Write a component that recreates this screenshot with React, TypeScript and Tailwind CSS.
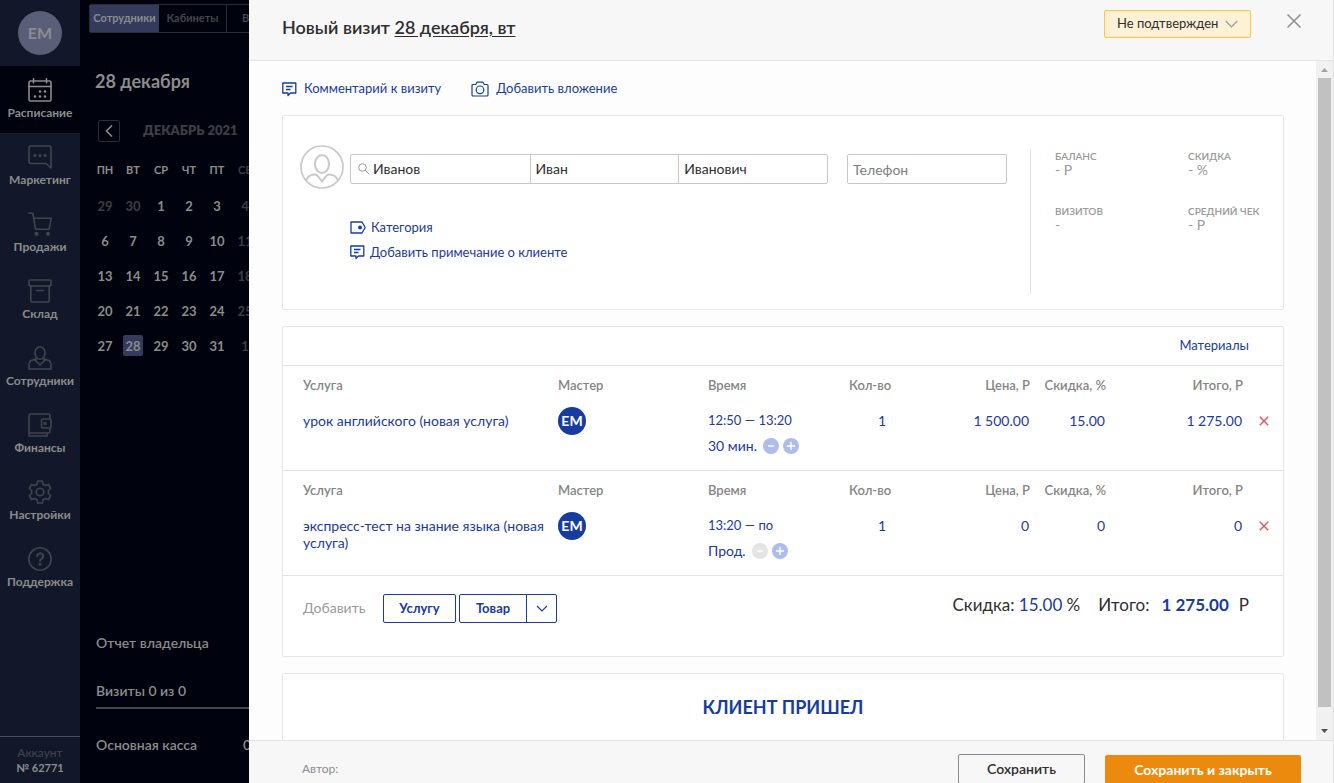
import React from "react";

type IconProps = { children: React.ReactNode };

function NavIcon({ children }: IconProps) {
  return (
    <svg width="24" height="24" viewBox="0 0 24 24" fill="none" stroke="currentColor" strokeWidth="1.6" strokeLinejoin="round" strokeLinecap="round" aria-hidden="true">
      {children}
    </svg>
  );
}

const navItems = [
  {
    label: "Расписание",
    icon: (
      <NavIcon>
        <rect x="1" y="3" width="22" height="20" rx="1.5" />
        <path d="M1 8.5h22M5.5 0.8v4M18.5 0.8v4" />
        <g fill="currentColor" stroke="none">
          <circle cx="12" cy="13.5" r="1.3" />
          <circle cx="17" cy="13.5" r="1.3" />
          <circle cx="7" cy="18.5" r="1.3" />
          <circle cx="12" cy="18.5" r="1.3" />
          <circle cx="17" cy="18.5" r="1.3" />
        </g>
      </NavIcon>
    ),
  },
  {
    label: "Маркетинг",
    icon: (
      <NavIcon>
        <path d="M3 1h18a2 2 0 0 1 2 2v20l-5-4.5H3a2 2 0 0 1-2-2V3a2 2 0 0 1 2-2z" />
        <g fill="currentColor" stroke="none">
          <circle cx="7" cy="10.5" r="1.5" />
          <circle cx="12" cy="10.5" r="1.5" />
          <circle cx="17" cy="10.5" r="1.5" />
        </g>
      </NavIcon>
    ),
  },
  {
    label: "Продажи",
    icon: (
      <NavIcon>
        <path d="M0.8 1.2h4l2.8 16h13.6l2-11H5.7" />
        <circle cx="8.5" cy="21.8" r="1.3" fill="currentColor" />
        <circle cx="20" cy="21.8" r="1.3" fill="currentColor" />
      </NavIcon>
    ),
  },
  {
    label: "Склад",
    icon: (
      <NavIcon>
        <rect x="1" y="1" width="22" height="6" rx="1" />
        <path d="M2.8 7v15a1 1 0 0 0 1 1h16.4a1 1 0 0 0 1-1V7M8.5 11.5h7" />
      </NavIcon>
    ),
  },
  {
    label: "Сотрудники",
    icon: (
      <NavIcon>
        <ellipse cx="12" cy="7" rx="5" ry="6.2" />
        <path d="M9 12.5l-4.5 1.4C2 14.7 1 16.2 1 18.5V23h22v-4.5c0-2.300-1-3.800-3.500-4.600L15 12.500M7 14.200l5 4.800 5-4.800" />
      </NavIcon>
    ),
  },
  {
    label: "Финансы",
    icon: (
      <NavIcon>
        <path d="M22 6V2.5A1.5 1.5 0 0 0 20.5 1h-18A1.5 1.5 0 0 0 1 2.5v20.500h18v-3M1 20h19.500a1.500 1.500 0 0 0 1.500-1.500V15" />
        <rect x="13.5" y="6" width="9.5" height="9" rx="1" />
        <circle cx="17" cy="10.5" r="1" fill="currentColor" />
      </NavIcon>
    ),
  },
  {
    label: "Настройки",
    icon: (
      <NavIcon>
        <path d="M9.7 1h4.6l.7 3.2 2.2 1.3 3.2-1 2.3 4-2.4 2.2v2.6l2.4 2.2-2.3 4-3.2-1-2.2 1.3-.7 3.2H9.7L9 19.8l-2.2-1.3-3.2 1-2.3-4 2.4-2.2v-2.6L1.3 8.5l2.3-4 3.200 1L9 4.200z" />
        <circle cx="12" cy="12" r="3.8" />
      </NavIcon>
    ),
  },
  {
    label: "Поддержка",
    icon: (
      <NavIcon>
        <circle cx="12" cy="12" r="11.2" />
        <path d="M9.2 9.3a2.9 2.9 0 1 1 4.3 2.5c-1 .6-1.5 1.1-1.5 2.4" strokeWidth="2" />
        <circle cx="12" cy="17.3" r=".7" fill="currentColor" />
      </NavIcon>
    ),
  },
];

function Sidebar() {
  return (
    <aside className="flex w-20 shrink-0 flex-col bg-[#121829]">
      <div className="flex h-[66px] shrink-0 items-center justify-center">
        <div className="flex size-11 items-center justify-center rounded-full bg-[#5a5e77] text-base font-bold text-[#8c8c92]">ЕМ</div>
      </div>
      <nav className="flex flex-col">
        {navItems.map((item, i) => (
          <a
            key={item.label}
            href="#"
            className={
              i === 0
                ? "flex h-[67px] flex-col items-center bg-[#00020d] pt-3 text-xs leading-[22px] font-bold text-[#8c8c8c]"
                : "flex h-[67px] flex-col items-center pt-3 text-xs leading-[22px] font-bold text-[#8c8c8c]"
            }
          >
            <span className={i === 0 ? "text-[#8c8c8c]" : "text-[#41444f]"}>{item.icon}</span>
            {item.label}
          </a>
        ))}
      </nav>
      <div className="mt-auto flex h-[47px] shrink-0 flex-col items-center border-t border-[#4a4d58] pt-2 text-xs leading-[15px]">
        <span className="text-[#41444f]">Аккаунт</span>
        <span className="text-[11px] font-bold text-[#8c8c8c]">№ 62771</span>
      </div>
    </aside>
  );
}

const weekdays = ["ПН", "ВТ", "СР", "ЧТ", "ПТ", "СБ", "ВС"];
const weeks = [
  [29, 30, 1, 2, 3, 4, 5],
  [6, 7, 8, 9, 10, 11, 12],
  [13, 14, 15, 16, 17, 18, 19],
  [20, 21, 22, 23, 24, 25, 26],
  [27, 28, 29, 30, 31, 1, 2],
];

function SchedulePanel() {
  return (
    <section className="flex w-[169px] shrink-0 flex-col overflow-hidden bg-[#00020d] text-[#8c8c8c]">
      <div className="mt-1 ml-[9px] flex h-[29px] w-[220px] shrink-0 rounded-xs border border-[#2a2c36] text-[11px] font-bold">
        <button className="w-[69px] shrink-0 bg-[#333a5c]">Сотрудники</button>
        <button className="w-[68px] shrink-0 border-r border-[#2a2c36] text-[#45464c]">Кабинеты</button>
        <button className="flex-1 pl-[15px] text-left text-[#45464c]">Все</button>
      </div>
      <h2 className="mt-9 ml-[15px] text-lg leading-6 font-bold">28 декабря</h2>
      <div className="mt-[27px] flex w-[220px] items-center pl-[18px]">
        <button aria-label="Предыдущий месяц" className="flex size-[22px] items-center justify-center rounded-xs border border-[#2a2c36]">
          <svg width="8" height="12" viewBox="0 0 8 12" fill="none" stroke="currentColor" strokeWidth="1.6" aria-hidden="true">
            <path d="M7 0.5L1.5 6L7 11.5" />
          </svg>
        </button>
        <span className="ml-[23px] text-[13px] font-extrabold text-[#3d3e44]">ДЕКАБРЬ 2021</span>
      </div>
      <table className="mt-[11px] ml-[11px] w-[196px] table-fixed text-center">
        <thead>
          <tr className="h-[35px] text-[11px]">
            {weekdays.map((d, i) => (
              <th key={d} className={i > 4 ? "p-0 font-bold text-[#3d3e44]" : "p-0 font-bold"}>{d}</th>
            ))}
          </tr>
        </thead>
        <tbody className="text-[13px] leading-5 font-bold">
          {weeks.map((week, r) => (
            <tr key={r} className="h-[35px]">
              {week.map((day, c) => (
                <td key={c} className="p-0">
                  <button
                    className={
                      r === 4 && c === 1
                        ? "h-[21px] w-5 rounded-xs bg-[#333a5c]"
                        : (r === 0 && c < 2) || c > 4
                          ? "h-[21px] w-5 text-[#3d3e44]"
                          : "h-[21px] w-5"
                    }
                  >
                    {day}
                  </button>
                </td>
              ))}
            </tr>
          ))}
        </tbody>
      </table>
      <div className="mt-auto flex w-[220px] flex-col pl-4 text-sm leading-5 font-semibold">
        <span>Отчет владельца</span>
        <div className="mt-7 border-b-2 border-[#45464c]">
          <span className="mb-1.5 block">Визиты 0 из 0</span>
        </div>
        <div className="mt-[26px] mb-7 flex gap-[43px]">
          <span className="w-[104px] whitespace-nowrap">Основная касса</span>
          <span>0</span>
        </div>
      </div>
    </section>
  );
}

function CommentIcon() {
  return (
    <svg width="15" height="15" viewBox="0 0 15 15" fill="none" stroke="#173ca0" strokeWidth="1.3" aria-hidden="true">
      <path d="M0.8 1h13v10H8.5L6 13.5V11H0.8z" strokeLinejoin="round" />
      <path d="M4 4.5h6.5M4 7.5h4.5" />
    </svg>
  );
}

function CameraIcon() {
  return (
    <svg width="18" height="16" viewBox="0 0 18 16" fill="none" stroke="#173ca0" strokeWidth="1.2" strokeLinejoin="round" aria-hidden="true">
      <path d="M2 3.5h2.8L6 1.2h6l1.2 2.3H16a1 1 0 0 1 1 1V14a1 1 0 0 1-1 1H2a1 1 0 0 1-1-1V4.5a1 1 0 0 1 1-1z" />
      <circle cx="9" cy="8.8" r="3.8" />
    </svg>
  );
}

function TagIcon() {
  return (
    <svg width="16" height="13" viewBox="0 0 16 13" fill="none" stroke="#173ca0" strokeWidth="1.3" strokeLinejoin="round" aria-hidden="true">
      <path d="M1 1h11l3.2 5.5L12 12H1z" />
      <circle cx="10" cy="6.5" r="1.9" fill="#173ca0" stroke="none" />
    </svg>
  );
}

function ClientCard() {
  const stats = [
    ["БАЛАНС", "- Р"],
    ["СКИДКА", "- %"],
    ["ВИЗИТОВ", "-"],
    ["СРЕДНИЙ ЧЕК", "- Р"],
  ];
  return (
    <section className="flex h-[195px] shrink-0 rounded-xs border border-[#e7e7e7] bg-white pl-[17px]">
      <svg className="mt-[29px] shrink-0" width="44" height="44" viewBox="0 0 44 44" fill="none" stroke="#c8c8c8" strokeWidth="1.7" aria-hidden="true">
        <circle cx="22" cy="22" r="21" />
        <ellipse cx="22" cy="19" rx="7" ry="9" strokeWidth="2" />
        <path d="M6 35.5c1.5-4 5-6 9-6 2.5 0 4.5 4 7 7 2.5-3 4.5-7 7-7 4 0 7.5 2 9 6" strokeWidth="2" />
      </svg>
      <div className="ml-1.5 flex min-w-0 flex-1 flex-col pt-[38px] pr-[23px]">
        <div className="flex gap-[19px]">
          <div className="flex h-[30px] min-w-0 flex-1 rounded-xs border border-[#c8c8c8] text-sm text-[#2e2e2e]">
            <label className="flex min-w-0 flex-[179] items-center pl-[7px]">
              <svg className="shrink-0" width="12" height="12" viewBox="0 0 12 12" fill="none" stroke="#999" aria-hidden="true">
                <circle cx="4.5" cy="4.5" r="3.8" />
                <path d="M7.3 7.3L11.3 11.3" />
              </svg>
              <input aria-label="Фамилия" defaultValue="Иванов" className="min-w-0 flex-1 pl-[3px] outline-none" />
            </label>
            <input aria-label="Имя" defaultValue="Иван" className="min-w-0 flex-[149] border-l border-[#c8c8c8] pl-[5px] outline-none" />
            <input aria-label="Отчество" defaultValue="Иванович" className="min-w-0 flex-[149] border-l border-[#c8c8c8] pl-[5px] outline-none" />
          </div>
          <input
            aria-label="Телефон"
            type="tel"
            placeholder="Телефон"
            className="h-[30px] w-40 shrink-0 rounded-xs border border-[#c8c8c8] pl-[5px] text-sm outline-none placeholder:text-[#7d7d7d]"
          />
        </div>
        <div className="mt-[31px] flex flex-col items-start text-[13px] leading-[25px] text-[#1b3a9b]">
          <button className="flex items-center gap-[5px]"><TagIcon />Категория</button>
          <button className="flex items-center gap-[5px]"><CommentIcon />Добавить примечание о клиенте</button>
        </div>
      </div>
      <dl className="mt-[34px] grid h-36 w-[253px] shrink-0 grid-cols-[133px_1fr] grid-rows-[55px_55px] border-l border-[#e2e2e2] pl-6 text-[#999]">
        {stats.map(([label, value]) => (
          <div key={label}>
            <dt className="text-[10px] leading-3 font-semibold">{label}</dt>
            <dd className="text-sm leading-4">{value}</dd>
          </div>
        ))}
      </dl>
    </section>
  );
}

type Line = {
  name: string;
  from: string;
  to: string;
  duration: string;
  canShrink: boolean;
  price: string;
  discount: string;
  total: string;
};

const lines: Line[] = [
  { name: "урок английского (новая услуга)", from: "12:50", to: "13:20", duration: "30 мин.", canShrink: true, price: "1 500.00", discount: "15.00", total: "1 275.00" },
  { name: "экспресс-тест на знание языка (новая услуга)", from: "13:20", to: "по", duration: "Прод.", canShrink: false, price: "0", discount: "0", total: "0" },
];

function Step({ plus, muted }: { plus?: boolean; muted?: boolean }) {
  return (
    <button
      aria-label={plus ? "Увеличить длительность" : "Уменьшить длительность"}
      className={
        muted
          ? "flex size-4 items-center justify-center rounded-full bg-[#e4e4e4]"
          : "flex size-4 items-center justify-center rounded-full bg-[#afbdec]"
      }
    >
      <svg width="8" height="8" viewBox="0 0 8 8" stroke="#fff" strokeWidth="1.4" aria-hidden="true">
        <path d={plus ? "M0 4h8M4 0v8" : "M1 4h6"} />
      </svg>
    </button>
  );
}

function ServiceTable() {
  return (
    <table className="w-full table-fixed border-separate border-spacing-0 text-left text-[#1b3a9b]">
      <colgroup>
        <col />
        <col className="w-[150px]" />
        <col className="w-[141px]" />
        <col className="w-[66px]" />
        <col className="w-[115px]" />
        <col className="w-[76px]" />
        <col className="w-[137px]" />
        <col className="w-10" />
      </colgroup>
      {lines.map((line) => (
        <tbody key={line.name} className="text-sm">
          <tr className="h-[39px] text-[13px] text-[#858585]">
            <th className="p-0 pl-5 font-semibold">Услуга</th>
            <th className="p-0 font-semibold">Мастер</th>
            <th className="p-0 font-semibold">Время</th>
            <th className="p-0 font-semibold">Кол-во</th>
            <th className="p-0 text-right font-semibold whitespace-nowrap">Цена, Р</th>
            <th className="p-0 text-right font-semibold whitespace-nowrap">Скидка, %</th>
            <th className="p-0 text-right font-semibold whitespace-nowrap">Итого, Р</th>
            <td />
          </tr>
          <tr className="h-[66px] align-top leading-[17px] [&>td]:border-b [&>td]:border-[#e4e4e4]">
            <td className="p-0 pt-[7px] pl-5">{line.name}</td>
            <td className="p-0 pt-0.5">
              <span className="flex size-7 items-center justify-center rounded-full bg-[#173ca0] text-sm font-bold text-white">ЕМ</span>
            </td>
            <td className="p-0 pt-[3px] leading-[25px]">
              <div className="text-[13px]">
                {line.from} <span className="text-[#444]">—</span> {line.to}
              </div>
              <div className="flex items-center">
                <span className="mr-1.5">{line.duration}</span>
                <span className="flex gap-1">
                  <Step muted={!line.canShrink} />
                  <Step plus />
                </span>
              </div>
            </td>
            <td className="p-0 pt-[7px] text-center">1</td>
            <td className="p-0 pt-[7px] pr-px text-right">{line.price}</td>
            <td className="p-0 pt-[7px] pr-px text-right">{line.discount}</td>
            <td className="p-0 pt-[7px] pr-px text-right">{line.total}</td>
            <td className="p-0 pt-[11px] pl-4">
              <button aria-label="Удалить" className="block">
                <svg width="10" height="10" viewBox="0 0 10 10" stroke="#de5454" strokeWidth="1.4" aria-hidden="true">
                  <path d="M0.8 0.8l8.4 8.4M9.2 0.8l-8.4 8.4" />
                </svg>
              </button>
            </td>
          </tr>
        </tbody>
      ))}
    </table>
  );
}

function ServicesCard() {
  return (
    <section className="mt-4 flex shrink-0 flex-col rounded-xs border border-[#e7e7e7] bg-white">
      <div className="flex h-[39px] items-center justify-end border-b border-[#e4e4e4] pr-[34px]">
        <a href="#" className="text-[13px] text-[#1b3a9b]">Материалы</a>
      </div>
      <ServiceTable />
      <div className="flex h-[80px] items-start pt-[18px] pr-[34px] pl-5">
        <span className="w-20 text-sm leading-[27px] text-[#999]">Добавить</span>
        <div className="flex h-[29px] gap-[3px] text-[13px] font-bold text-[#1b3a9b]">
          <button className="w-[73px] rounded-xs border border-[#173ca0]">Услугу</button>
          <div className="flex rounded-xs border border-[#173ca0]">
            <button className="w-[66px]">Товар</button>
            <button aria-label="Другие товары" className="flex w-[30px] items-center justify-center border-l border-[#173ca0]">
              <svg width="12" height="7" viewBox="0 0 12 7" fill="none" stroke="#173ca0" strokeWidth="1.2" aria-hidden="true">
                <path d="M1 1l5 5 5-5" />
              </svg>
            </button>
          </div>
        </div>
        <div className="ml-auto flex text-[17px] leading-[22px] text-[#2e2e2e]">
          <span>
            Скидка: <span className="text-[#1b3a9b]">15.00</span> %
          </span>
          <span className="ml-[18px]">Итого:</span>
          <span className="ml-3 font-bold text-[#1b3a9b]">1 275.00</span>
          <span className="ml-2.5">Р</span>
        </div>
      </div>
    </section>
  );
}

function Scrollbar() {
  return (
    <div className="flex w-[17px] shrink-0 flex-col items-center bg-[#f1f1f1]" aria-hidden="true">
      <svg className="shrink-0" width="17" height="17" viewBox="0 0 17 17"><path d="M5 11l3.5-4L12 11z" fill="#a3a3a3" /></svg>
      <div className="w-[13px] flex-1 bg-[#c1c1c1]" />
      <div className="h-4 shrink-0" />
      <svg className="shrink-0" width="17" height="17" viewBox="0 0 17 17"><path d="M5 6l3.5 4L12 6z" fill="#505050" /></svg>
    </div>
  );
}

function VisitDialog() {
  return (
    <main className="flex min-w-0 flex-1 flex-col border-r border-[#e4e4e4] bg-[#fdfdfd]">
      <header className="flex h-[61px] shrink-0 items-start border-b border-[#e4e4e4] bg-[#f7f7f7] pl-[33px]">
        <h1 className="mt-[15px] text-lg leading-6 font-semibold text-[#2e2e2e]">
          Новый визит <a href="#" className="underline underline-offset-2">28 декабря, вт</a>
        </h1>
        <button className="mt-2.5 ml-auto flex h-7 w-[147px] items-center justify-between rounded-xs border border-[#fcc544] bg-[#fef1d6] px-3 text-[13px] whitespace-nowrap text-[#2e2e2e]">
          Не подтвержден
          <svg width="13" height="8" viewBox="0 0 13 8" fill="none" stroke="#999" strokeWidth="1.2" aria-hidden="true">
            <path d="M0.8 1l5.7 6 5.7-6" />
          </svg>
        </button>
        <button aria-label="Закрыть" className="mt-3.5 mr-8 ml-9">
          <svg width="14" height="14" viewBox="0 0 14 14" stroke="#8c8c8c" strokeWidth="1.5" aria-hidden="true">
            <path d="M0.5 0.5l13 13M13.5 0.5l-13 13" />
          </svg>
        </button>
      </header>
      <div className="flex min-h-0 flex-1">
        <div className="flex min-w-0 flex-1 flex-col overflow-hidden pr-8 pl-[33px]">
          <div className="flex h-[54px] shrink-0 items-center gap-[30px] pt-0.5 text-[13px] text-[#1b3a9b]">
            <button className="flex items-center gap-[7px]"><CommentIcon />Комментарий к визиту</button>
            <button className="flex items-center gap-[7px]"><CameraIcon />Добавить вложение</button>
          </div>
          <ClientCard />
          <ServicesCard />
          <section className="mt-4 h-[120px] shrink-0 rounded-xs border border-[#e7e7e7] bg-white">
            <button className="h-[66px] w-full text-lg font-bold text-[#173ca0]">КЛИЕНТ ПРИШЕЛ</button>
          </section>
        </div>
        <Scrollbar />
      </div>
      <footer className="flex h-[43px] shrink-0 items-start overflow-hidden border-t border-[#e4e4e4] bg-[#f7f7f7] pt-[13px] pr-8 pl-[53px]">
        <span className="text-xs leading-[30px] text-[#8c8c8c]">Автор:</span>
        <button className="ml-auto h-[30px] w-[127px] shrink-0 rounded-xs border border-[#8c8c8c] text-sm font-semibold text-[#2e2e2e]">Сохранить</button>
        <button className="mt-px ml-5 h-[29px] w-[196px] shrink-0 rounded-xs bg-[#eb8a0c] text-sm font-bold text-white">Сохранить и закрыть</button>
      </footer>
    </main>
  );
}

export default function App() {
  return (
    <div className="flex h-screen overflow-hidden font-['Lato','Inter',sans-serif]">
      <Sidebar />
      <SchedulePanel />
      <VisitDialog />
    </div>
  );
}
